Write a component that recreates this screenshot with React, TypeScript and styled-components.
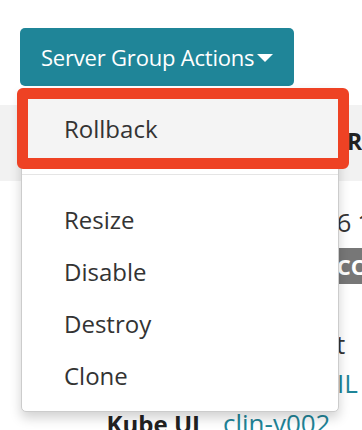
import React from "react";
import styled, { createGlobalStyle } from "styled-components";

const GlobalStyle = createGlobalStyle`
  html, body {
    margin: 0;
    padding: 0;
    background: #fff;
  }
  body {
    font-family: "Open Sans", "Liberation Sans", sans-serif;
    color: #333;
  }
`;

const Page = styled.div`
  position: relative;
  width: 362px;
  height: 430px;
  overflow: hidden;
  background: #fff;
`;

const Toolbar = styled.div`
  display: flex;
  padding: 28px 0 0 20px;
`;

const ActionButton = styled.button`
  display: flex;
  align-items: center;
  height: 58px;
  padding: 0 21px 0 21px;
  border: none;
  border-radius: 5px;
  background: #1f8598;
  color: #fff;
  font-family: "Open Sans", "Liberation Sans", sans-serif;
  font-size: 22px;
  line-height: 58px;
  letter-spacing: -0.2px;
`;

const Caret = styled.span`
  display: inline-block;
  width: 0;
  height: 0;
  margin-left: 3px;
  margin-top: 2px;
  border-left: 8px solid transparent;
  border-right: 8px solid transparent;
  border-top: 8px solid #fff;
`;

const HeadingBand = styled.div`
  margin-top: 19px;
  height: 76px;
  background: #f2f2f2;
  padding-left: 347px;
  display: flex;
  align-items: center;
`;

const Heading = styled.h2`
  margin: -4px 0 0;
  font-size: 23px;
  font-weight: 700;
  color: #222;
  white-space: nowrap;
`;

const Details = styled.div`
  display: flex;
  flex-direction: column;
  padding-top: 23px;
`;

const Row = styled.div<{ $gap?: number }>`
  display: flex;
  align-items: center;
  gap: 23px;
  margin-top: ${(p) => p.$gap ?? 0}px;
  white-space: nowrap;
`;

const Label = styled.span`
  width: 200px;
  flex: none;
  text-align: right;
  font-size: 24px;
  font-weight: 700;
  color: #222;
`;

const Value = styled.span<{ $link?: boolean; $tight?: boolean }>`
  font-size: 26px;
  letter-spacing: ${(p) => (p.$tight ? "-0.5px" : "0")};
  color: ${(p) => (p.$link ? "#1f8598" : "#333")};
`;

const Badge = styled.span`
  display: inline-block;
  padding: 0 8px;
  height: 36px;
  line-height: 36px;
  background: #777;
  color: #fff;
  font-size: 22px;
  font-weight: 700;
  text-transform: uppercase;
`;

const Menu = styled.ul`
  position: absolute;
  top: 88px;
  left: 21px;
  width: 316px;
  margin: 0;
  padding: 8px 0 9px;
  list-style: none;
  background: #fff;
  border: 1px solid #ccc;
  border-radius: 0 0 5px 5px;
  box-shadow: 0 6px 12px rgba(0, 0, 0, 0.18);
`;

const MenuItem = styled.li<{ $active?: boolean }>`
  padding: ${(p) => (p.$active ? "6px 42px" : "0 42px")};
  line-height: 52px;
  font-size: 24px;
  color: #333;
  background: ${(p) => (p.$active ? "#f4f4f4" : "transparent")};
`;

const Divider = styled.li`
  height: 1px;
  margin: 13px 0 19px;
  background: #e5e5e5;
`;

const Highlight = styled.div`
  position: absolute;
  top: 88px;
  left: 17px;
  width: 332px;
  height: 81px;
  box-sizing: border-box;
  border: 11px solid #ee4224;
  border-radius: 6px;
  pointer-events: none;
`;

export default function App() {
  return (
    <Page>
      <GlobalStyle />
      <Toolbar>
        <ActionButton>
          Server Group Actions
          <Caret />
        </ActionButton>
      </Toolbar>
      <HeadingBand>
        <Heading>Rollback</Heading>
      </HeadingBand>
      <Details>
        <Row>
          <Label>Created</Label>
          <Value $tight>Jun 2, 2016 1:42</Value>
        </Row>
        <Row $gap={8}>
          <Label>Status</Label>
          <Badge>Healthy Count</Badge>
        </Row>
        <Row $gap={42}>
          <Label>Account</Label>
          <Value>test-agent</Value>
        </Row>
        <Row $gap={3}>
          <Label>Cluster</Label>
          <Value $link>clin-DETAIL</Value>
        </Row>
        <Row $gap={4}>
          <Label>Kube UI</Label>
          <Value $link>clin-v002</Value>
        </Row>
      </Details>
      <Menu>
        <MenuItem $active>Rollback</MenuItem>
        <Divider />
        <MenuItem>Resize</MenuItem>
        <MenuItem>Disable</MenuItem>
        <MenuItem>Destroy</MenuItem>
        <MenuItem>Clone</MenuItem>
      </Menu>
      <Highlight />
    </Page>
  );
}
